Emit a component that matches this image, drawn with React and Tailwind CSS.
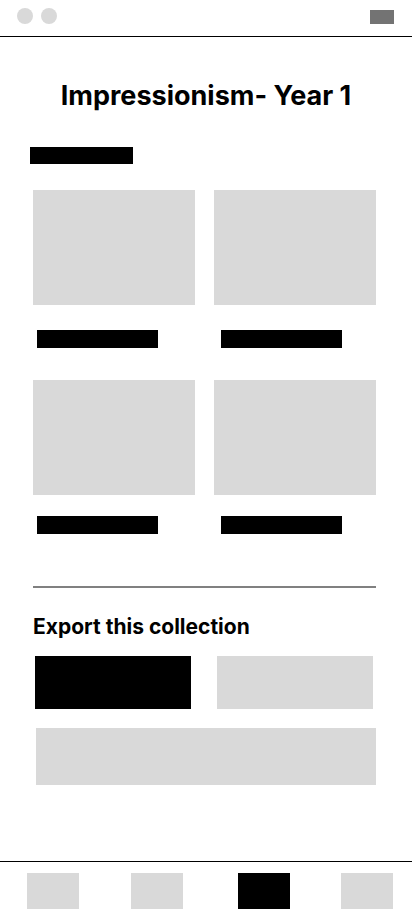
export default function App() {
  return (
    <div className="w-[412px] h-[917px] bg-white flex flex-col" style={{ fontFamily: "Inter, 'Liberation Sans', sans-serif" }}>
      {/* top bar */}
      <header className="h-[37px] shrink-0 border-b border-black flex items-start justify-between pl-[17px] pr-[18px]">
        <div className="flex gap-[8px] pt-[8px]">
          <span className="w-[16px] h-[16px] rounded-full bg-[#d9d9d9]"></span>
          <span className="w-[16px] h-[16px] rounded-full bg-[#d9d9d9]"></span>
        </div>
        <div className="mt-[10px] w-[24px] h-[14px] bg-[#737373]"></div>
      </header>

      <main className="flex-1 flex flex-col">
        <h1 className="mt-[43px] text-center text-[27px] leading-[32px] font-bold text-black">
          Impressionism- Year 1
        </h1>

        <div className="mt-[35px] ml-[30px] w-[103px] h-[17px] bg-black"></div>

        <div className="mt-[26px] pl-[33px] pr-[36px] grid grid-cols-2 gap-x-[19px]">
          <div>
            <div className="h-[115px] bg-[#d9d9d9]"></div>
            <div className="mt-[25px] ml-[4px] w-[121px] h-[18px] bg-black"></div>
          </div>
          <div>
            <div className="h-[115px] bg-[#d9d9d9]"></div>
            <div className="mt-[25px] ml-[7px] w-[121px] h-[18px] bg-black"></div>
          </div>
          <div className="mt-[32px]">
            <div className="h-[115px] bg-[#d9d9d9]"></div>
            <div className="mt-[21px] ml-[4px] w-[121px] h-[18px] bg-black"></div>
          </div>
          <div className="mt-[32px]">
            <div className="h-[115px] bg-[#d9d9d9]"></div>
            <div className="mt-[21px] ml-[7px] w-[121px] h-[18px] bg-black"></div>
          </div>
        </div>

        <div className="mt-[52px] ml-[33px] mr-[36px] h-[2px] bg-[#808080]"></div>

        <h2 className="mt-[26px] ml-[33px] text-[21px] leading-[26px] font-bold text-black">
          Export this collection
        </h2>

        <div className="mt-[16px] ml-[35px] flex gap-[26px]">
          <div className="w-[156px] h-[53px] bg-black"></div>
          <div className="w-[156px] h-[53px] bg-[#d9d9d9]"></div>
        </div>

        <div className="mt-[19px] ml-[36px] w-[340px] h-[57px] bg-[#d9d9d9]"></div>
      </main>

      {/* bottom nav */}
      <nav className="h-[56px] shrink-0 border-t border-black flex items-start pt-[11px]">
        <div className="ml-[27px] w-[52px] h-[36px] bg-[#d9d9d9]"></div>
        <div className="ml-[52px] w-[52px] h-[36px] bg-[#d9d9d9]"></div>
        <div className="ml-[55px] w-[52px] h-[36px] bg-black"></div>
        <div className="ml-[51px] w-[52px] h-[36px] bg-[#d9d9d9]"></div>
      </nav>
    </div>
  );
}
